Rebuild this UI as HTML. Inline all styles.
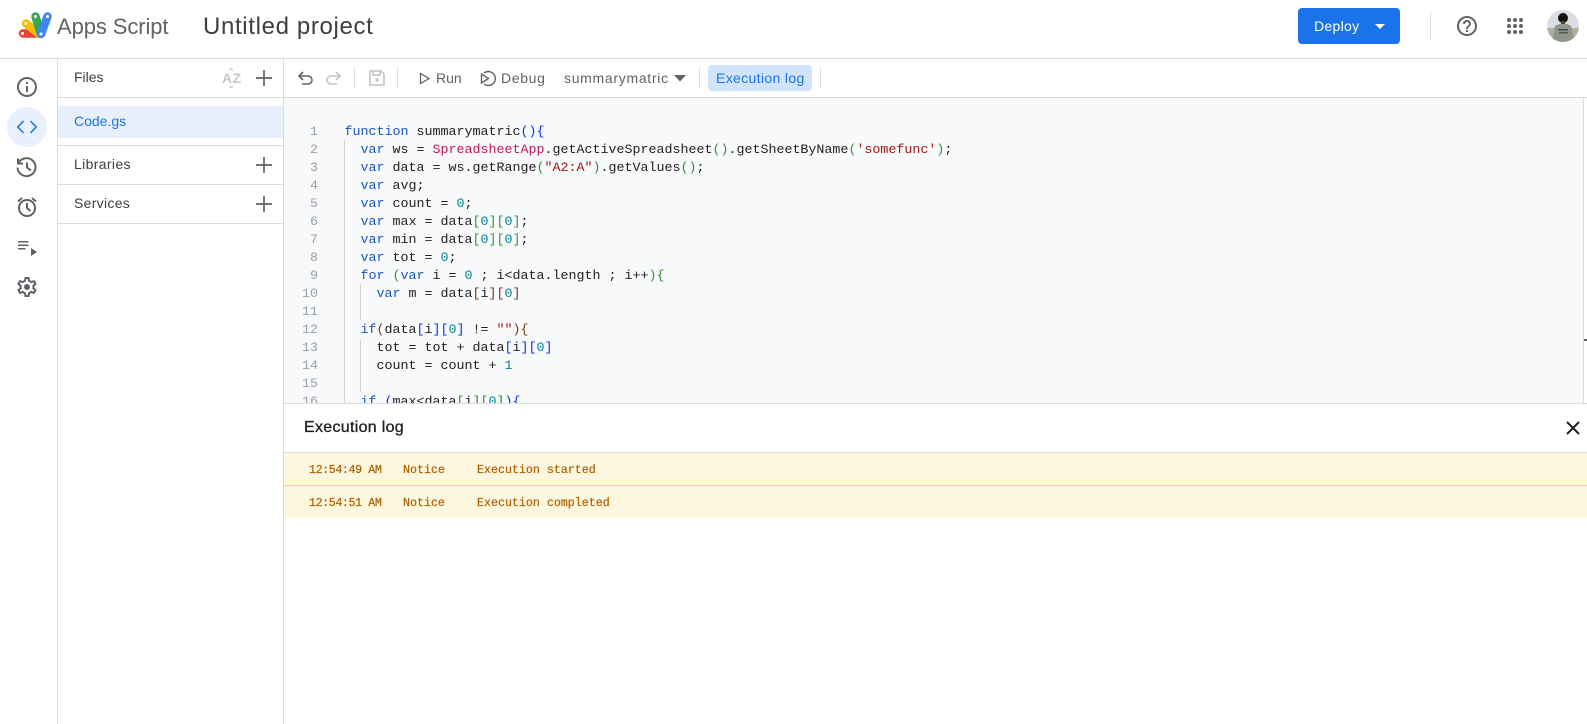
<!DOCTYPE html>
<html><head><meta charset="utf-8"><title>Apps Script</title>
<style>
html,body{margin:0;padding:0;width:1587px;height:724px;overflow:hidden;background:#fff;font-family:"Liberation Sans",sans-serif}
.a{position:absolute}
.t{position:absolute;white-space:nowrap;line-height:20px}
.l{position:absolute;background:#dadce0}
svg{position:absolute;overflow:visible}
#code{position:absolute;left:284px;top:98px;width:1299px;height:305px;background:#f8f9fa;overflow:hidden}
.c{position:absolute;left:60.5px;margin-top:2px;white-space:pre;font:13.33px/18px "Liberation Mono",monospace;color:#202124;height:18px}
.n{position:absolute;left:0;width:34px;margin-top:2px;text-align:right;font:13.33px/18px "Liberation Mono",monospace;color:#9aa0a6;height:18px}
.k{color:#1a56b8}.s{color:#a31515}.d{color:#00838f}.p{color:#c2185b}
.b{color:#0431fa}.g{color:#319331}.r{color:#7b3814}
.log{position:absolute;font:11.65px/20px "Liberation Mono",monospace;color:#b06000;white-space:pre;-webkit-text-stroke:.2px #b06000}
</style></head><body>

<!-- header -->
<svg style="left:0;top:0" width="60" height="50" viewBox="0 0 60 50">
<path d="M23 33.500H41" stroke="#ea4335" stroke-width="8.500" stroke-linecap="round" fill="none"/>
<path d="M26 23.500L39 34" stroke="#fbbc04" stroke-width="8.500" stroke-linecap="round" fill="none"/>
<path d="M35.500 16.500L40.500 33" stroke="#34a853" stroke-width="8.500" stroke-linecap="round" fill="none"/>
<path d="M47.500 16.500L41 34" stroke="#4285f4" stroke-width="8.500" stroke-linecap="round" fill="none"/>
<circle cx="22.500" cy="33.500" r="1.500" fill="#fff"/><circle cx="26" cy="23.500" r="1.500" fill="#fff"/><circle cx="35.500" cy="16.500" r="1.500" fill="#fff"/><circle cx="47.500" cy="16.500" r="1.500" fill="#fff"/><circle cx="41" cy="34" r="1.500" fill="#fff"/>
</svg>
<div class="t" style="left:57px;top:13px;font-size:22px;line-height:28px;color:#5f6368;letter-spacing:-.1px">Apps Script</div>
<div class="t" style="left:203px;top:12px;font-size:24px;line-height:30px;color:#3c4043;letter-spacing:.65px">Untitled project</div>

<div class="a" style="left:1298px;top:8px;width:102px;height:36px;background:#1a73e8;border-radius:4px"></div>
<div class="t" style="left:1314px;top:16px;font-size:14px;color:#fff;font-weight:500;letter-spacing:.3px">Deploy</div>
<svg style="left:1375px;top:24px" width="10" height="6"><path d="M0 0H10L5 5Z" fill="#fff"/></svg>
<div class="l" style="left:1430px;top:13px;width:1px;height:27px"></div>
<svg style="left:1455px;top:14px" width="24" height="24" viewBox="0 0 24 24"><path fill="#5f6368" d="M11 18h2v-2h-2v2zm1-16C6.480 2 2 6.480 2 12s4.480 10 10 10 10-4.480 10-10S17.520 2 12 2zm0 18c-4.410 0-8-3.590-8-8s3.590-8 8-8 8 3.590 8 8-3.590 8-8 8zm0-14c-2.210 0-4 1.790-4 4h2c0-1.100.9-2 2-2s2 .9 2 2c0 2-3 1.750-3 5h2c0-2.250 3-2.500 3-5 0-2.210-1.790-4-4-4z"/></svg>
<svg style="left:1503px;top:14px" width="24" height="24" viewBox="0 0 24 24" fill="#5f6368">
<circle cx="6" cy="6" r="2"/><circle cx="12" cy="6" r="2"/><circle cx="18" cy="6" r="2"/><circle cx="6" cy="12" r="2"/><circle cx="12" cy="12" r="2"/><circle cx="18" cy="12" r="2"/><circle cx="6" cy="18" r="2"/><circle cx="12" cy="18" r="2"/><circle cx="18" cy="18" r="2"/></svg>
<svg style="left:1547px;top:10px" width="32" height="32" viewBox="0 0 32 32">
<defs><clipPath id="av"><circle cx="16" cy="16" r="16"/></clipPath></defs>
<g clip-path="url(#av)"><rect width="32" height="32" fill="#dcdde2"/><rect y="18" width="32" height="14" fill="#b5ac9a"/>
<path d="M5 32L8 16Q16 11 24 16L28 32Z" fill="#8f978c"/><rect x="11" y="19" width="10" height="1.500" fill="#444"/><rect x="12" y="22" width="9" height="1.500" fill="#555"/>
<circle cx="16" cy="8" r="5" fill="#111"/><rect x="14" y="11" width="4" height="3" fill="#5a4336"/></g></svg>
<div class="l" style="left:0;top:58px;width:1587px;height:1px"></div>

<!-- left rail -->
<div class="l" style="left:57px;top:59px;width:1px;height:665px"></div>
<div class="a" style="left:7px;top:107px;width:40px;height:40px;border-radius:50%;background:#e8f0fe"></div>
<svg style="left:15px;top:75px" width="24" height="24" viewBox="0 0 24 24"><path fill="#5f6368" d="M11 7h2v2h-2zm0 4h2v6h-2zm1-9C6.480 2 2 6.480 2 12s4.480 10 10 10 10-4.480 10-10S17.520 2 12 2zm0 18c-4.410 0-8-3.590-8-8s3.590-8 8-8 8 3.590 8 8-3.590 8-8 8z"/></svg>
<svg style="left:15px;top:115px" width="24" height="24" viewBox="0 0 24 24" fill="none" stroke="#1a73e8" stroke-width="1.500"><path d="M8.500 6L2.800 12 8.500 18M15.500 6l5.700 6-5.700 6"/></svg>
<svg style="left:15px;top:155px" width="24" height="24" viewBox="0 0 24 24" fill="none" stroke="#5f6368" stroke-width="2"><path d="M3 3.500V8.500H8"/><path d="M3.500 8a9 9 0 1 1-1 4.500"/><path d="M12 7.500v5l4 3"/></svg>
<svg style="left:15px;top:195px" width="24" height="24" viewBox="0 0 24 24" fill="none" stroke="#5f6368" stroke-width="2"><circle cx="12" cy="13" r="8"/><path d="M12 8v5l3.500 3M3 6.500L7 3M21 6.500L17 3"/></svg>
<svg style="left:15px;top:235px" width="24" height="24" viewBox="0 0 24 24" fill="#5f6368"><rect x="3" y="6" width="10.500" height="1.500"/><rect x="3" y="9.500" width="10.500" height="1.500"/><rect x="3" y="13" width="7.500" height="1.500"/><path d="M16 13l6 4-6 4z"/></svg>
<svg style="left:15px;top:275px" width="24" height="24" viewBox="0 0 24 24"><path fill="#5f6368" d="M19.430 12.980c.04-.32.07-.64.07-.98s-.03-.66-.07-.98l2.110-1.650c.19-.15.24-.42.12-.64l-2-3.460c-.12-.22-.39-.3-.61-.22l-2.490 1c-.52-.4-1.080-.73-1.690-.98l-.38-2.650C14.460 2.180 14.250 2 14 2h-4c-.25 0-.46.18-.49.42l-.38 2.650c-.61.25-1.170.59-1.690.98l-2.490-1c-.23-.09-.49 0-.61.22l-2 3.460c-.13.22-.07.49.12.64l2.110 1.650c-.04.32-.07.65-.07.98s.03.66.07.98l-2.110 1.650c-.19.15-.24.42-.12.64l2 3.460c.12.22.39.3.61.22l2.490-1c.52.4 1.080.73 1.690.98l.38 2.650c.03.24.24.42.49.42h4c.25 0 .46-.18.49-.42l.38-2.650c.61-.25 1.170-.59 1.690-.98l2.490 1c.23.09.49 0 .61-.22l2-3.460c.12-.22.07-.49-.12-.64l-2.110-1.650zM17.450 11.270c.04.31.05.52.05.73s-.02.43-.05.73l-.14 1.130.89.7 1.080.84-.7 1.210-1.270-.51-1.040-.42-.9.68c-.43.32-.84.56-1.250.73l-1.060.43-.16 1.130-.2 1.350h-1.400l-.19-1.350-.16-1.130-1.060-.43c-.43-.18-.83-.41-1.230-.71l-.91-.7-1.060.43-1.270.51-.7-1.210 1.080-.84.89-.7-.14-1.130c-.03-.31-.05-.54-.05-.74s.02-.43.05-.73l.14-1.130-.89-.7-1.080-.84.7-1.210 1.270.51 1.040.42.9-.68c.43-.32.84-.56 1.250-.73l1.060-.43.16-1.130.2-1.350h1.390l.19 1.350.16 1.130 1.060.43c.43.18.83.41 1.230.71l.91.7 1.060-.43 1.270-.51.7 1.210-1.070.85-.89.7.14 1.130zM12 9a3 3 0 1 0 0 6 3 3 0 0 0 0-6z"/></svg>

<!-- files panel -->
<div class="t" style="left:74px;top:67px;font-size:14px;color:#3c4043">Files</div>
<div class="t" style="left:222px;top:69px;font-size:14px;color:#c4c7c9;font-weight:bold;line-height:18px;letter-spacing:.5px">AZ</div>
<svg style="left:222px;top:67px" width="20" height="22"><path d="M7 3.500L9 1.500 11 3.500M7 19L9 21 11 19" fill="none" stroke="#c4c7c9"/></svg>
<svg style="left:256px;top:70px" width="16" height="16"><path d="M8 0V16M0 8H16" stroke="#5f6368" stroke-width="1.700"/></svg>
<div class="l" style="left:58px;top:97px;width:225px;height:1px"></div>
<div class="a" style="left:58px;top:106px;width:225px;height:32px;background:#e8f0fe"></div>
<div class="t" style="left:74px;top:111px;font-size:14px;color:#1a73e8">Code.gs</div>
<div class="l" style="left:58px;top:145px;width:225px;height:1px"></div>
<div class="t" style="left:74px;top:154px;font-size:14px;color:#3c4043;letter-spacing:.35px">Libraries</div>
<svg style="left:256px;top:157px" width="16" height="16"><path d="M8 0V16M0 8H16" stroke="#5f6368" stroke-width="1.700"/></svg>
<div class="l" style="left:58px;top:184px;width:225px;height:1px"></div>
<div class="t" style="left:74px;top:193px;font-size:14px;color:#3c4043;letter-spacing:.3px">Services</div>
<svg style="left:256px;top:196px" width="16" height="16"><path d="M8 0V16M0 8H16" stroke="#5f6368" stroke-width="1.700"/></svg>
<div class="l" style="left:58px;top:223px;width:225px;height:1px"></div>
<div class="l" style="left:283px;top:59px;width:1px;height:665px"></div>

<!-- toolbar -->
<svg style="left:295px;top:67px" width="22" height="22" viewBox="0 0 22 22" fill="none" stroke="#5f6368" stroke-width="1.600"><path d="M8 5L4 9l4 4M4 9h9a4 4 0 0 1 0 8H7"/></svg>
<svg style="left:322px;top:67px" width="22" height="22" viewBox="0 0 22 22" fill="none" stroke="#c4c7c9" stroke-width="1.600"><path d="M14 5l4 4-4 4M18 9H9a4 4 0 0 0 0 8h6"/></svg>
<div class="l" style="left:354px;top:68px;width:1px;height:20px"></div>
<svg style="left:369px;top:70px" width="16" height="16" viewBox="0 0 16 16" fill="none" stroke="#bdc1c6" stroke-width="1.500"><path d="M1 1H12L15 4V15H1Z"/><path d="M4 1V5H11V1"/><circle cx="8" cy="10" r="1.600" fill="#bdc1c6" stroke="none"/></svg>
<div class="l" style="left:397px;top:68px;width:1px;height:20px"></div>
<svg style="left:419px;top:72px" width="12" height="13" fill="none" stroke="#5f6368" stroke-width="1.300"><path d="M1.500 1.500V11.500L10 6.500Z"/></svg>
<div class="t" style="left:436px;top:68px;font-size:14px;color:#5f6368">Run</div>
<svg style="left:480px;top:70px" width="17" height="17" viewBox="0 0 17 17" fill="none" stroke="#5f6368" stroke-width="1.400"><path d="M4 3A7 7 0 1 1 4 14"/><path d="M1.500 4V13L8.500 8.500Z"/></svg>
<div class="t" style="left:501px;top:68px;font-size:14px;color:#5f6368;letter-spacing:.65px">Debug</div>
<div class="t" style="left:564px;top:68px;font-size:14px;color:#5f6368;letter-spacing:.7px">summarymatric</div>
<svg style="left:674px;top:75px" width="12" height="7"><path d="M0 0H12L6 6.500Z" fill="#5f6368"/></svg>
<div class="l" style="left:699px;top:68px;width:1px;height:20px"></div>
<div class="a" style="left:708px;top:65px;width:104px;height:26px;background:#d2e3fc;border-radius:4px"></div>
<div class="t" style="left:716px;top:68px;font-size:14px;color:#1a73e8;letter-spacing:.35px">Execution log</div>
<div class="l" style="left:820px;top:68px;width:1px;height:20px"></div>
<div class="l" style="left:284px;top:97px;width:1303px;height:1px"></div>

<!-- code -->
<div id="code">
<div class="a" style="left:60px;top:42px;width:1px;height:263px;background:#d3d3d3"></div>
<div class="a" style="left:76px;top:186px;width:1px;height:36px;background:#d3d3d3"></div>
<div class="a" style="left:76px;top:242px;width:1px;height:52px;background:#d3d3d3"></div>
<div class="n" style="top:24px">1</div><div class="c" style="top:24px"><span class="k">function</span> summarymatric<span class="b">(){</span></div>
<div class="n" style="top:42px">2</div><div class="c" style="top:42px">  <span class="k">var</span> ws = <span class="p">SpreadsheetApp</span>.getActiveSpreadsheet<span class="g">()</span>.getSheetByName<span class="g">(</span><span class="s">'somefunc'</span><span class="g">)</span>;</div>
<div class="n" style="top:60px">3</div><div class="c" style="top:60px">  <span class="k">var</span> data = ws.getRange<span class="g">(</span><span class="s">"A2:A"</span><span class="g">)</span>.getValues<span class="g">()</span>;</div>
<div class="n" style="top:78px">4</div><div class="c" style="top:78px">  <span class="k">var</span> avg;</div>
<div class="n" style="top:96px">5</div><div class="c" style="top:96px">  <span class="k">var</span> count = <span class="d">0</span>;</div>
<div class="n" style="top:114px">6</div><div class="c" style="top:114px">  <span class="k">var</span> max = data<span class="g">[</span><span class="d">0</span><span class="g">][</span><span class="d">0</span><span class="g">]</span>;</div>
<div class="n" style="top:132px">7</div><div class="c" style="top:132px">  <span class="k">var</span> min = data<span class="g">[</span><span class="d">0</span><span class="g">][</span><span class="d">0</span><span class="g">]</span>;</div>
<div class="n" style="top:150px">8</div><div class="c" style="top:150px">  <span class="k">var</span> tot = <span class="d">0</span>;</div>
<div class="n" style="top:168px">9</div><div class="c" style="top:168px">  <span class="k">for</span> <span class="g">(</span><span class="k">var</span> i = <span class="d">0</span> ; i&lt;data.length ; i++<span class="g">){</span></div>
<div class="n" style="top:186px">10</div><div class="c" style="top:186px">    <span class="k">var</span> m = data<span class="r">[</span>i<span class="r">][</span><span class="d">0</span><span class="r">]</span></div>
<div class="n" style="top:204px">11</div>
<div class="n" style="top:222px">12</div><div class="c" style="top:222px">  <span class="k">if</span><span class="r">(</span>data<span class="b">[</span>i<span class="b">][</span><span class="d">0</span><span class="b">]</span> != <span class="s">""</span><span class="r">){</span></div>
<div class="n" style="top:240px">13</div><div class="c" style="top:240px">    tot = tot + data<span class="b">[</span>i<span class="b">][</span><span class="d">0</span><span class="b">]</span></div>
<div class="n" style="top:258px">14</div><div class="c" style="top:258px">    count = count + <span class="d">1</span></div>
<div class="n" style="top:276px">15</div>
<div class="n" style="top:294px">16</div><div class="c" style="top:294px">  <span class="k">if</span> <span class="b">(</span>max&lt;data<span class="g">[</span>i<span class="g">][</span><span class="d">0</span><span class="g">]</span><span class="b">){</span></div>
</div>
<div class="l" style="left:1583px;top:98px;width:1px;height:305px"></div>
<div class="a" style="left:1584px;top:339px;width:3px;height:2px;background:#5f6368"></div>

<!-- log -->
<div class="l" style="left:284px;top:403px;width:1303px;height:1px"></div>
<div class="t" style="left:304px;top:418px;font-size:16px;color:#202124;font-weight:500;letter-spacing:.3px;-webkit-text-stroke:.3px #202124">Execution log</div>
<svg style="left:1566px;top:421px" width="14" height="14"><path d="M1 1L13 13M13 1L1 13" stroke="#202124" stroke-width="2"/></svg>
<div class="l" style="left:284px;top:452px;width:1303px;height:1px"></div>
<div class="a" style="left:284px;top:453px;width:1303px;height:32px;background:#fef7e0"></div>
<div class="a" style="left:284px;top:485px;width:1303px;height:1px;background:#fdd663"></div>
<div class="a" style="left:284px;top:486px;width:1303px;height:32px;background:#fef7e0"></div>
<div class="log" style="left:309px;top:461px;letter-spacing:-.4px">12:54:49 AM</div>
<div class="log" style="left:403px;top:461px">Notice</div>
<div class="log" style="left:477px;top:461px">Execution started</div>
<div class="log" style="left:309px;top:494px;letter-spacing:-.4px">12:54:51 AM</div>
<div class="log" style="left:403px;top:494px">Notice</div>
<div class="log" style="left:477px;top:494px">Execution completed</div>
</body></html>
